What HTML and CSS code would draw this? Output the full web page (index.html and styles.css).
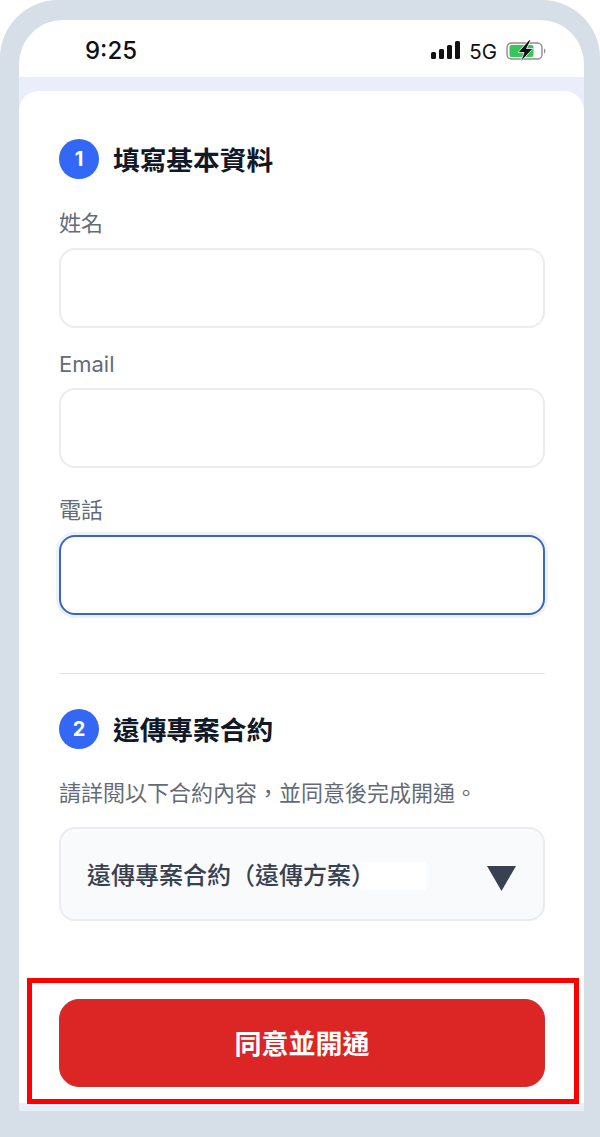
FILE: index.html
```html
<!DOCTYPE html>
<html lang="zh-Hant">
<head>
<meta charset="utf-8">
<title>填寫基本資料</title>
<link rel="stylesheet" href="styles.css">
</head>
<body>
<div class="frame">
  <div class="screen">
    <div class="status">
      <span class="time">9:25</span>
      <div class="status-right">
        <svg class="signal" width="29" height="18" viewBox="0 0 29 18"><rect x="0" y="11" width="5" height="7" rx="1.5"/><rect x="8" y="8" width="5" height="10" rx="1.5"/><rect x="16" y="4" width="5" height="14" rx="1.5"/><rect x="24" y="0" width="5" height="18" rx="1.5"/></svg>
        <span class="net">5G</span>
        <svg class="battery" width="40" height="22" viewBox="0 0 40 22"><rect x="1" y="3" width="35" height="16" rx="4.5" fill="none" stroke="#8e8e8e" stroke-width="1.4"/><rect x="3.500" y="5" width="24" height="12" rx="2" fill="#34c759"/><path d="M38 8.500c1 .4 1.400 1.300 1.400 2.500s-.4 2.100-1.400 2.500z" fill="#8e8e8e"/><path d="M23 0 L12 12.500 H18 L14.500 22 L27 8.500 H20.500 L25 0z" fill="#111" stroke="#fff" stroke-width=".8"/></svg>
      </div>
    </div>
    <div class="band">
      <main class="card">
        <section class="head first">
          <span class="num">1</span>
          <h2>填寫基本資料</h2>
        </section>
        <label class="field f1">
          <span class="lab cjk">姓名</span>
          <span class="input"></span>
        </label>
        <label class="field f2">
          <span class="lab">Email</span>
          <span class="input"></span>
        </label>
        <label class="field f3">
          <span class="lab cjk">電話</span>
          <span class="input focus"></span>
        </label>
        <hr class="rule">
        <section class="head">
          <span class="num">2</span>
          <h2>遠傳專案合約</h2>
        </section>
        <p class="desc">請詳閱以下合約內容，並同意後完成開通。</p>
        <div class="select">
          <span class="select-text">遠傳專案合約（遠傳方案）<span class="mask"></span></span>
          <svg class="tri" width="29" height="25" viewBox="0 0 29 25"><path d="M0 0H29L14.500 25z" fill="#374151"/></svg>
        </div>
        <div class="cta"><button class="btn">同意並開通</button></div>
      </main>
    </div>
    <div class="mark"></div>
  </div>
</div>
</body>
</html>
```
FILE: styles.css
```css
* { box-sizing: border-box; }
html, body { margin: 0; padding: 0; background: #fff; }
body {
  width: 600px;
  height: 1137px;
  overflow: hidden;
  font-family: Inter, "Noto Sans CJK TC", sans-serif;
}
.frame {
  width: 600px;
  height: 1137px;
  background: #d6dee8;
  border-radius: 58px 58px 0 0;
  padding: 20px 16px 26px 19px;
}
.screen {
  position: relative;
  height: 1091px;
  display: flex;
  flex-direction: column;
  background: #fff;
  border-radius: 44px 44px 0 0;
  overflow: hidden;
}
.status {
  height: 57px;
  flex: none;
  display: flex;
  align-items: center;
  justify-content: space-between;
  padding: 5px 38px 0 66px;
}
.time {
  font-family: Inter, sans-serif;
  font-size: 24px;
  font-weight: 500;
  color: #111;
  margin-top: -1px;
}
.status-right { display: flex; align-items: center; gap: 9px; }
.signal { fill: #111; margin-top: -3px; margin-left: 1px; }
.net { font-family: Inter, sans-serif; font-size: 20.500px; color: #111; }
.battery { margin-top: -1px; }
.band {
  flex: 1;
  background: #e9eefa;
  padding-top: 14px;
  display: flex;
}
.card {
  flex: 1;
  height: 1012px;
  background: #fff;
  border-radius: 20px 20px 0 0;
  padding: 48px 39px 0 40px;
}
.head { display: flex; align-items: center; gap: 14px; height: 40px; }
.num {
  width: 40px;
  height: 40px;
  flex: none;
  border-radius: 50%;
  background: #3367f5;
  color: #fff;
  font-size: 20px;
  font-weight: 700;
  display: flex;
  align-items: center;
  justify-content: center;
}
h2 {
  margin: 0;
  padding-top: 1px;
  font-size: 26.700px;
  font-weight: 700;
  color: #111827;
  line-height: 40px;
}
.field { display: block; }
.f1 { margin-top: 29px; }
.f2 { margin-top: 20px; }
.f3 { margin-top: 27px; }
.lab {
  display: block;
  font-size: 22px;
  line-height: 32px;
  color: #636b78;
  height: 32px;
  margin-bottom: 8px;
}
.lab.cjk { line-height: 30px; }
.input {
  display: block;
  height: 80px;
  border: 2px solid #eaecef;
  border-radius: 16px;
  background: #fff;
}
.input.focus {
  border: 2px solid #3a67c4;
  box-shadow: 0 0 0 3px #edf1fb;
}
.rule {
  margin: 58px 0 0;
  border: 0;
  border-top: 1px solid #e2e4e8;
  height: 1px;
}
.rule + .head { margin-top: 35px; }
.desc {
  margin: 28px 0 0;
  font-size: 22px;
  line-height: 32px;
  color: #636b78;
}
.select {
  margin-top: 18px;
  height: 94px;
  border: 2px solid #eaecef;
  border-radius: 16px;
  background: #f9fafb;
  display: flex;
  align-items: center;
  justify-content: space-between;
  padding: 0 27px 0 26px;
}
.select-text {
  display: flex;
  align-items: center;
  margin-top: -2px;
  font-size: 24px;
  font-weight: 500;
  color: #374151;
}
.mask { width: 66px; height: 28px; background: #fff; margin-left: -15px; margin-top: 5px; }
.tri { margin-top: 8px; }
.cta { margin-top: 78px; }
.btn {
  display: block;
  width: 100%;
  height: 88px;
  padding: 0 0 2px;
  border: 1px solid #c9302f;
  border-radius: 20px;
  background: #dc2626;
  color: #fff;
  font-family: inherit;
  font-size: 27px;
  font-weight: 700;
}
.mark {
  position: absolute;
  left: 8px;
  top: 958px;
  width: 552px;
  height: 126px;
  border: 5px solid #f00;
}
```
